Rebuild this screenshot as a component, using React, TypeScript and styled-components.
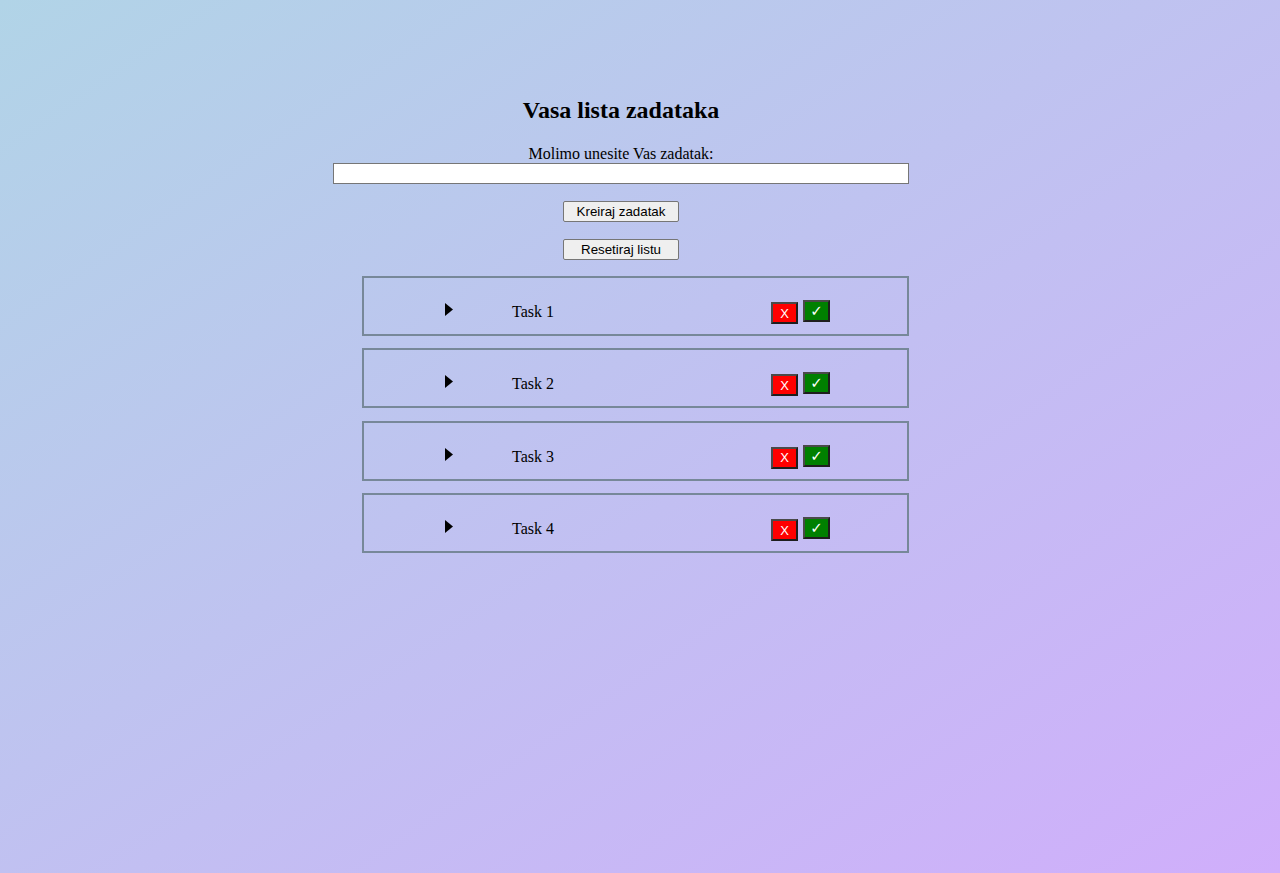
import React from "react";
import styled, { createGlobalStyle } from "styled-components";

const Global = createGlobalStyle`
  html {
    min-height: 100%;
    background: linear-gradient(to bottom right, #b1d4e7, #d0aefb);
  }
  body {
    margin: 8px;
    font-family: "Liberation Serif", "Times New Roman", serif;
    color: #000;
  }
`;

const Container = styled.main`
  width: 576px;
  margin-left: 325px;
  padding-top: 89px;
`;

const Title = styled.h2`
  margin: 0;
  font-size: 24px;
  font-weight: bold;
  text-align: center;
  line-height: 27px;
`;

const Label = styled.label`
  display: block;
  margin-top: 20px;
  font-size: 16px;
  line-height: 19px;
  text-align: center;
`;

const TextInput = styled.input`
  display: block;
  box-sizing: border-box;
  width: 576px;
  height: 21px;
  margin: 0;
  padding: 1px 2px;
  border: 1px solid #767676;
  background: #fff;
`;

const ActionButton = styled.button`
  display: block;
  box-sizing: border-box;
  width: 116px;
  height: 21px;
  margin: 17px auto 0;
  padding: 0;
  font-family: "Liberation Sans", Arial, sans-serif;
  font-size: 13.33px;
  color: #000;
  background: #efefef;
  border: 1px solid #767676;
  border-radius: 2px;
`;

const TaskList = styled.ul`
  list-style: none;
  margin: 16px 0 0 29px;
  padding: 0;
  width: 547px;
  display: flex;
  flex-direction: column;
  gap: 12.4px;
`;

const TaskItem = styled.li`
  box-sizing: border-box;
  height: 60px;
  border: 2px solid #778899;
  padding-top: 22px;
  display: grid;
  grid-template-columns: 81px 67px 259px auto;
  align-items: start;
`;

const Arrow = styled.svg`
  grid-column: 2;
  margin-top: 3px;
  width: 8px;
  height: 13px;
`;

const TaskName = styled.span`
  grid-column: 3;
  margin-top: 3px;
  font-size: 16px;
  line-height: 18px;
`;

const Controls = styled.div`
  grid-column: 4;
  display: flex;
  align-items: flex-start;
  gap: 5px;
`;

const IconButton = styled.button<{ $tone: "red" | "green"; $offset: number }>`
  box-sizing: border-box;
  width: 27px;
  height: 22px;
  margin: ${(p) => p.$offset}px 0 0;
  padding: 0;
  display: flex;
  align-items: center;
  justify-content: center;
  font-family: ${(p) =>
    p.$tone === "green"
      ? `"DejaVu Sans", "Liberation Sans", sans-serif`
      : `"Liberation Sans", Arial, sans-serif`};
  font-size: ${(p) => (p.$tone === "green" ? "15px" : "13px")};
  font-weight: ${(p) => (p.$tone === "green" ? "bold" : "normal")};
  color: #fff;
  background: ${(p) => (p.$tone === "red" ? "#ff0000" : "#008000")};
  border: 2px solid #4a4a4a;
  border-right-color: #1e1e1e;
  border-bottom-color: #1e1e1e;
`;

const tasks = ["Task 1", "Task 2", "Task 3", "Task 4"];

export default function App() {
  return (
    <>
      <Global />
      <Container>
        <Title>Vasa lista zadataka</Title>
        <Label htmlFor="task">Molimo unesite Vas zadatak:</Label>
        <TextInput id="task" type="text" />
        <ActionButton>Kreiraj zadatak</ActionButton>
        <ActionButton>Resetiraj listu</ActionButton>
        <TaskList>
          {tasks.map((t) => (
            <TaskItem key={t}>
              <Arrow viewBox="0 0 8 13">
                <path d="M0 0 L8 6.5 L0 13 Z" fill="#000" />
              </Arrow>
              <TaskName>{t}</TaskName>
              <Controls>
                <IconButton $tone="red" $offset={2}>X</IconButton>
                <IconButton $tone="green" $offset={0}>✓</IconButton>
              </Controls>
            </TaskItem>
          ))}
        </TaskList>
      </Container>
    </>
  );
}
